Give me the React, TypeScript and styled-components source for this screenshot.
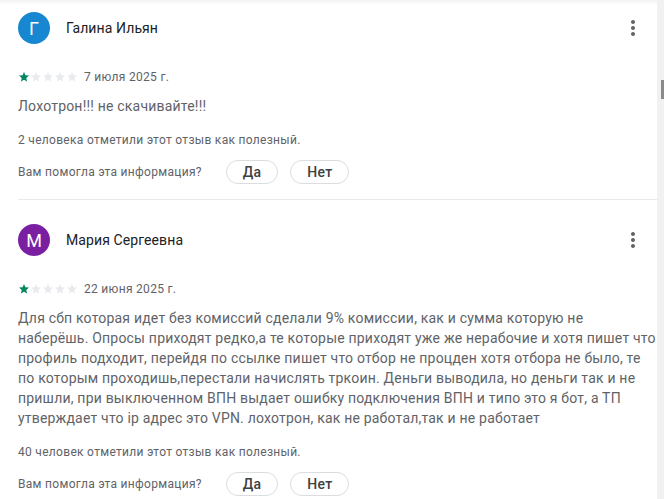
import React from "react";
import styled, { createGlobalStyle } from "styled-components";

const GlobalStyle = createGlobalStyle`
  html, body {
    margin: 0;
    padding: 0;
    background: #fff;
  }
  body {
    font-family: Roboto, "Noto Sans", Arial, sans-serif;
    overflow: hidden;
  }
`;

const Page = styled.div`
  display: flex;
  width: 664px;
  height: 499px;
  overflow: hidden;
`;

const Main = styled.div`
  position: relative;
  width: 657px;
  flex: none;
`;

const TopShade = styled.div`
  position: absolute;
  left: 0;
  right: 0;
  top: 0;
  height: 5px;
  background: linear-gradient(rgba(0, 0, 0, 0.05), rgba(0, 0, 0, 0));
`;

const ScrollTrack = styled.div`
  position: relative;
  width: 7px;
  height: 499px;
  background: #f1f1f1;
`;

const ScrollThumb = styled.div`
  position: absolute;
  top: 80px;
  right: 0;
  width: 3px;
  height: 19px;
  background: #8a8a8a;
`;

const Review = styled.div<{ $first?: boolean }>`
  margin-left: 18px;
  padding: ${(p) => (p.$first ? "12px" : "24px")} 0 15px;
  border-bottom: 1px solid #e8eaed;
`;

const Header = styled.div`
  display: flex;
  align-items: center;
  height: 32px;
`;

const Avatar = styled.div<{ $color: string }>`
  width: 32px;
  height: 32px;
  border-radius: 50%;
  background: ${(p) => p.$color};
  color: #fff;
  display: flex;
  align-items: center;
  justify-content: center;
  font-size: 18px;
  flex: none;
`;

const Name = styled.div`
  margin-left: 16px;
  font-size: 14px;
  letter-spacing: 0.1px;
  color: #202124;
  flex: 1;
`;

const MenuButton = styled.div`
  width: 24px;
  height: 24px;
  margin-right: 12px;
  display: flex;
  align-items: center;
  justify-content: center;
`;

const RatingRow = styled.div`
  display: flex;
  align-items: center;
  height: 16px;
  margin-top: 25px;
`;

const Stars = styled.div`
  display: flex;
`;

const DateText = styled.span`
  margin-left: 6px;
  font-size: 12px;
  letter-spacing: 0.3px;
  color: #5f6368;
`;

const Body = styled.div`
  margin-top: 11px;
  font-size: 14px;
  line-height: 20px;
  letter-spacing: 0.2px;
  color: #5f6368;
`;

const Helpful = styled.div`
  margin-top: 16px;
  font-size: 12px;
  line-height: 16px;
  letter-spacing: 0.3px;
  color: #5f6368;
`;

const Feedback = styled.div`
  display: flex;
  align-items: center;
  margin-top: 12px;
  font-size: 12px;
  letter-spacing: 0.3px;
  color: #5f6368;
`;

const Buttons = styled.div`
  display: flex;
  gap: 12px;
  margin-left: 24px;
`;

const Pill = styled.button`
  height: 24px;
  padding: 0 16px;
  border: 1px solid #dadce0;
  border-radius: 12px;
  background: #fff;
  font-family: inherit;
  font-size: 14px;
  font-weight: 500;
  letter-spacing: 0.25px;
  color: #3c4043;
  cursor: pointer;
`;

const Star = ({ on }: { on: boolean }) => (
  <svg width="12" height="12" viewBox="0 0 24 24">
    <path
      d="M12 17.27L18.18 21l-1.64-7.03L22 9.24l-7.19-.61L12 2 9.19 8.63 2 9.24l5.46 4.73L5.82 21z"
      fill={on ? "#01875f" : "#e8eaed"}
    />
  </svg>
);

const MoreIcon = () => (
  <svg width="24" height="24" viewBox="0 0 24 24">
    <path
      d="M12 8c1.1 0 2-.9 2-2s-.9-2-2-2-2 .9-2 2 .9 2 2 2zm0 2c-1.1 0-2 .9-2 2s.9 2 2 2 2-.9 2-2-.9-2-2-2zm0 6c-1.1 0-2 .9-2 2s.9 2 2 2 2-.9 2-2-.9-2-2-2z"
      fill="#5f6368"
    />
  </svg>
);

type ReviewData = {
  letter: string;
  color: string;
  name: string;
  rating: number;
  date: string;
  text: string;
  helpful: string;
};

const reviews: ReviewData[] = [
  {
    letter: "Г",
    color: "#1787d1",
    name: "Галина Ильян",
    rating: 1,
    date: "7 июля 2025 г.",
    text: "Лохотрон!!! не скачивайте!!!",
    helpful: "2 человека отметили этот отзыв как полезный.",
  },
  {
    letter: "М",
    color: "#7b1fa2",
    name: "Мария Сергеевна",
    rating: 1,
    date: "22 июня 2025 г.",
    text:
      "Для сбп которая идет без комиссий сделали 9% комиссии, как и сумма которую не наберёшь. Опросы приходят редко,а те которые приходят уже же нерабочие и хотя пишет что профиль подходит, перейдя по ссылке пишет что отбор не процден хотя отбора не было, те по которым проходишь,перестали начислять тркоин. Деньги выводила, но деньги так и не пришли, при выключенном ВПН выдает ошибку подключения ВПН и типо это я бот, а ТП утверждает что ip адрес это VPN. лохотрон, как не работал,так и не работает",
    helpful: "40 человек отметили этот отзыв как полезный.",
  },
];

export default function App() {
  return (
    <Page>
      <GlobalStyle />
      <Main>
        <TopShade />
        {reviews.map((r, i) => (
          <Review key={r.name} $first={i === 0}>
            <Header>
              <Avatar $color={r.color}>{r.letter}</Avatar>
              <Name>{r.name}</Name>
              <MenuButton>
                <MoreIcon />
              </MenuButton>
            </Header>
            <RatingRow>
              <Stars>
                {[1, 2, 3, 4, 5].map((n) => (
                  <Star key={n} on={n <= r.rating} />
                ))}
              </Stars>
              <DateText>{r.date}</DateText>
            </RatingRow>
            <Body>{r.text}</Body>
            <Helpful>{r.helpful}</Helpful>
            <Feedback>
              Вам помогла эта информация?
              <Buttons>
                <Pill>Да</Pill>
                <Pill>Нет</Pill>
              </Buttons>
            </Feedback>
          </Review>
        ))}
      </Main>
      <ScrollTrack>
        <ScrollThumb />
      </ScrollTrack>
    </Page>
  );
}
